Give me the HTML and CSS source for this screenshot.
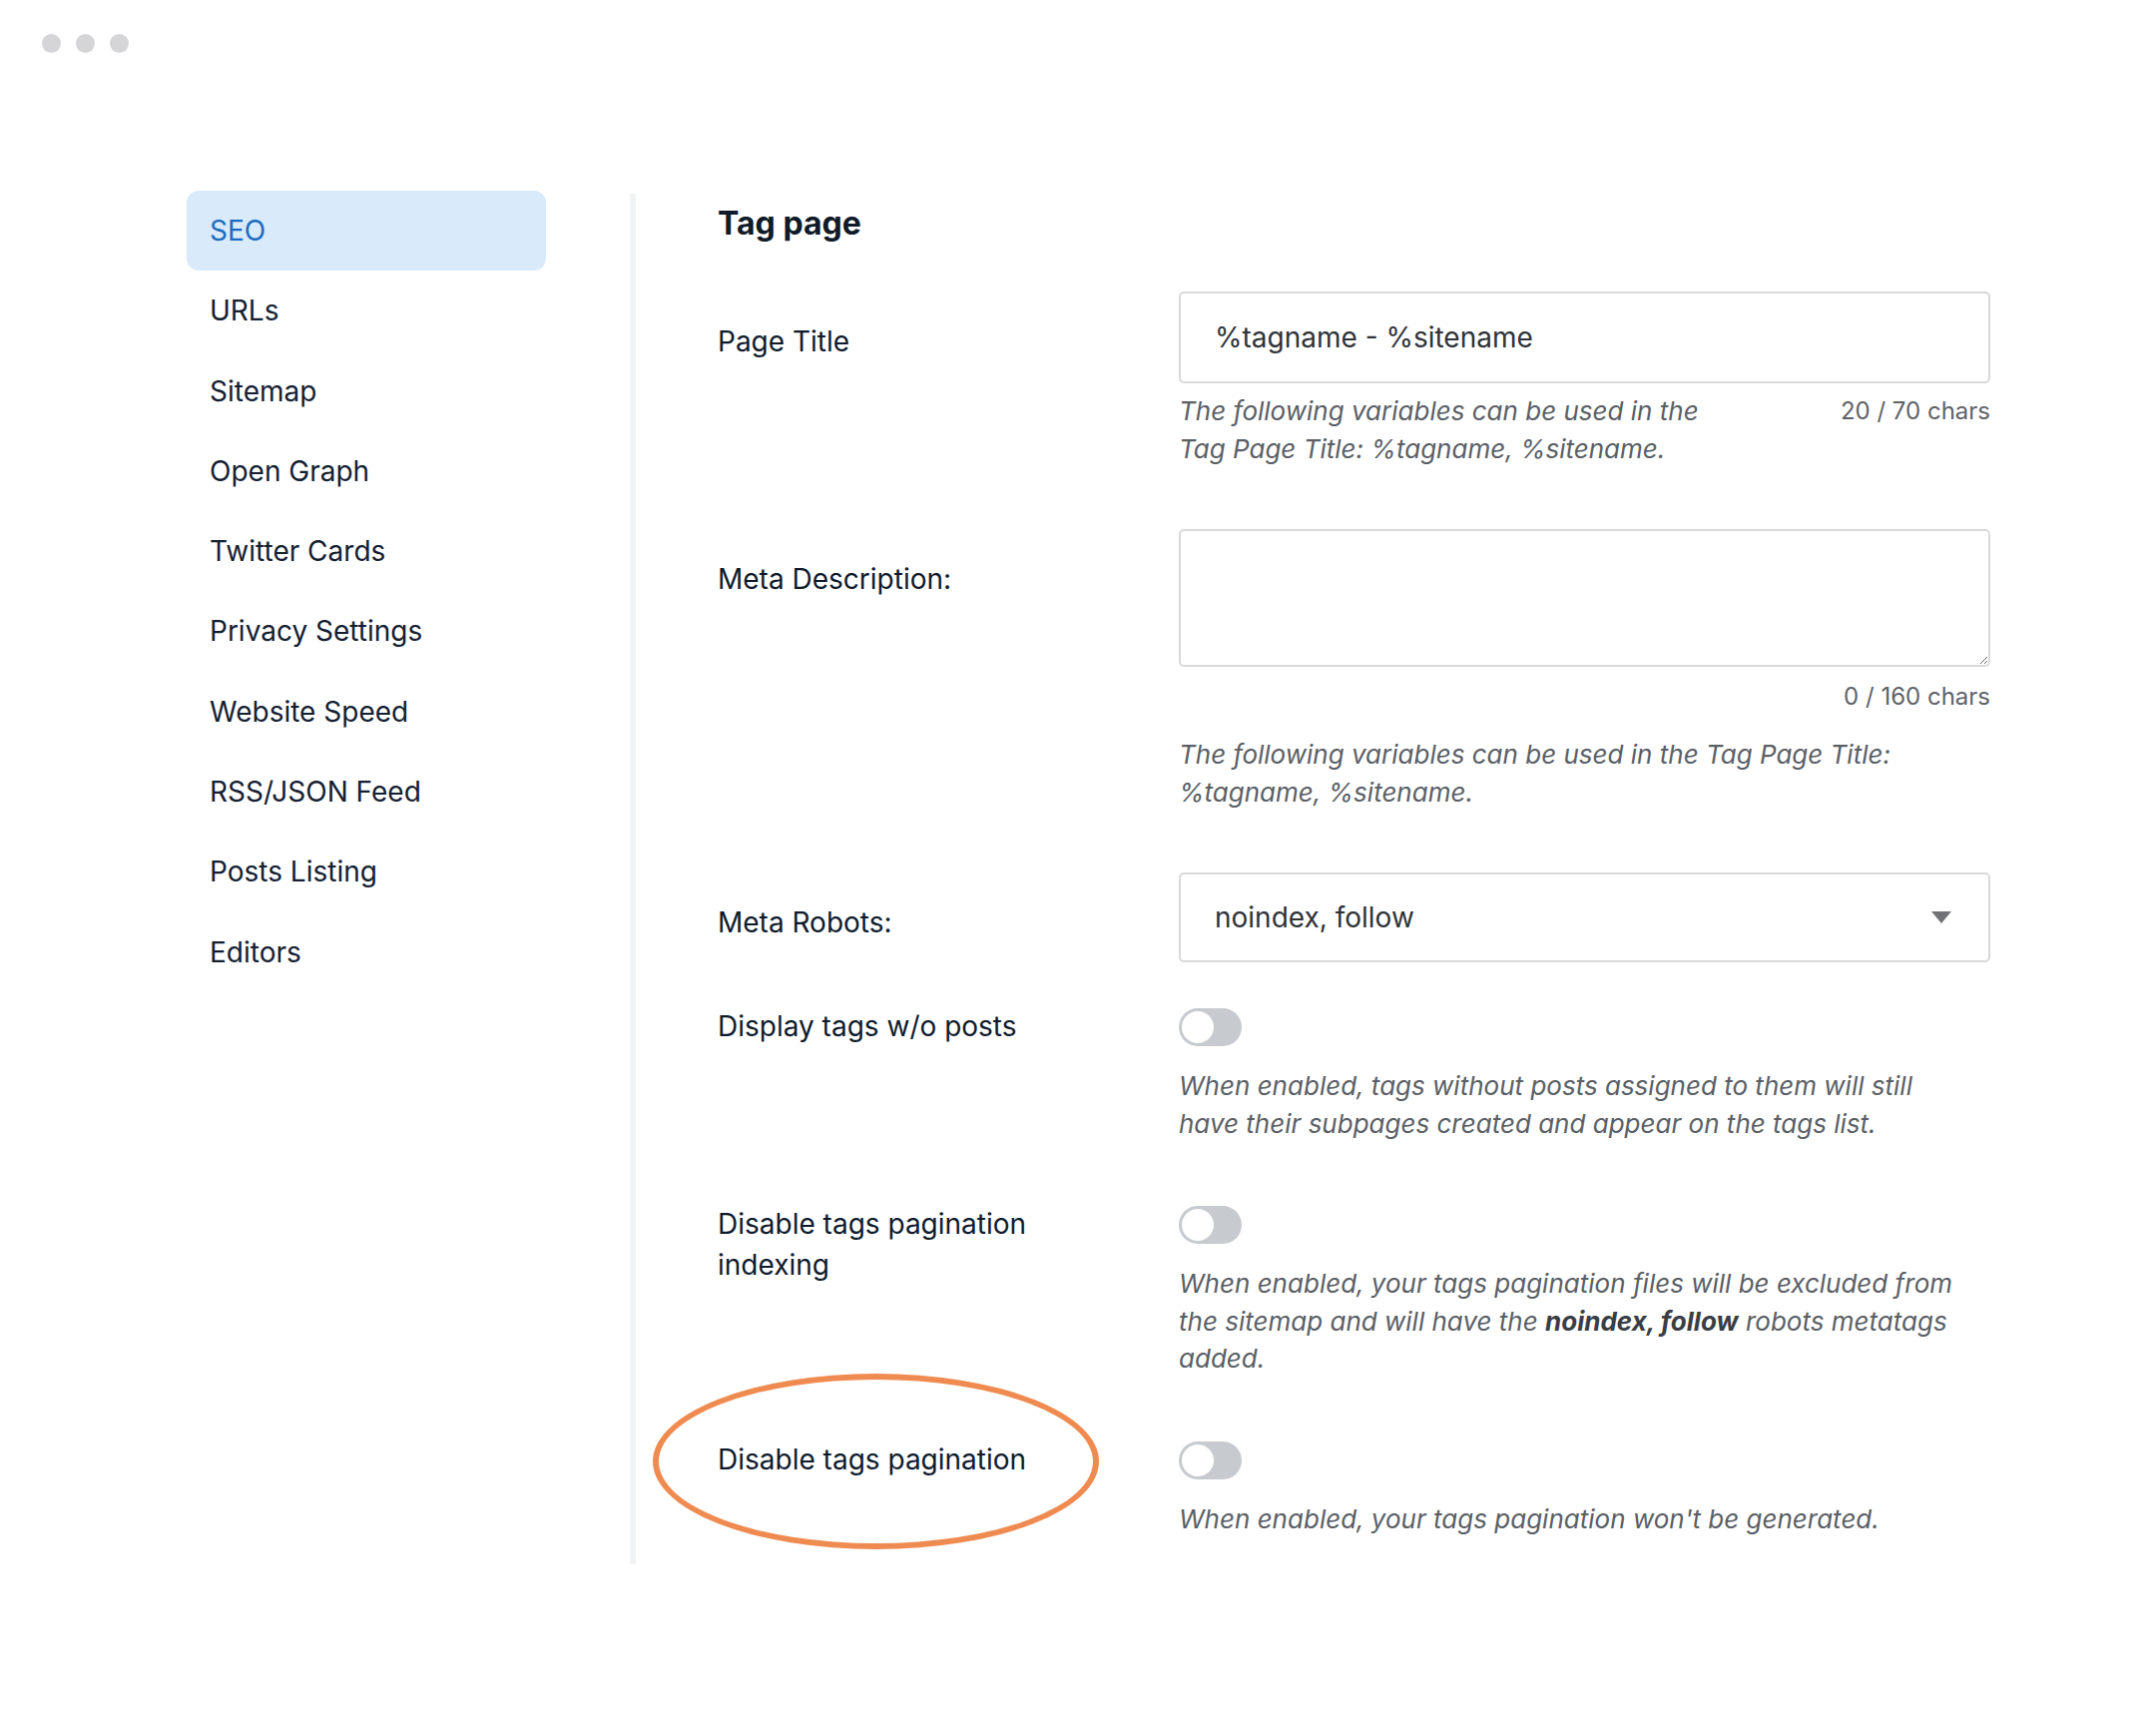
FILE: index.html
```html
<!DOCTYPE html>
<html>
<head>
    <link rel="stylesheet" href="styles.css">
</head>
<body>
    <div class="window-bar">
        <span class="dot"></span>
        <span class="dot"></span>
        <span class="dot"></span>
    </div>

    <div class="layout">
        <ul class="sidebar">
            <li class="active">SEO</li>
            <li>URLs</li>
            <li>Sitemap</li>
            <li>Open Graph</li>
            <li>Twitter Cards</li>
            <li>Privacy Settings</li>
            <li>Website Speed</li>
            <li>RSS/JSON Feed</li>
            <li>Posts Listing</li>
            <li>Editors</li>
        </ul>

        <div class="content">
            <h2>Tag page</h2>

            <div class="row">
                <label class="label label-field">Page Title</label>
                <div class="field">
                    <input type="text" class="text-input" value="%tagname - %sitename">
                    <div class="help-row">
                        <p class="help help-narrow">The following variables can be used in the Tag Page Title: %tagname, %sitename.</p>
                        <span class="counter">20 / 70 chars</span>
                    </div>
                </div>
            </div>

            <div class="row">
                <label class="label label-field">Meta Description:</label>
                <div class="field">
                    <textarea class="text-area"></textarea>
                    <div class="counter counter-block">0 / 160 chars</div>
                    <p class="help help-spaced">The following variables can be used in the Tag Page Title: %tagname, %sitename.</p>
                </div>
            </div>

            <div class="row row-select">
                <label class="label label-field">Meta Robots:</label>
                <div class="field">
                    <div class="select">
                        <span>noindex, follow</span>
                        <svg width="20" height="12" viewBox="0 0 20 12"><path d="M0 0 L20 0 L10 12 Z" fill="#707275"/></svg>
                    </div>
                </div>
            </div>

            <div class="row">
                <label class="label">Display tags w/o posts</label>
                <div class="field">
                    <span class="toggle"><span class="knob"></span></span>
                    <p class="help help-toggle">When enabled, tags without posts assigned to them will still have their subpages created and appear on the tags list.</p>
                </div>
            </div>

            <div class="row">
                <label class="label">Disable tags pagination indexing</label>
                <div class="field">
                    <span class="toggle"><span class="knob"></span></span>
                    <p class="help help-toggle">When enabled, your tags pagination files will be excluded from the sitemap and will have the <strong>noindex, follow</strong> robots metatags added.</p>
                </div>
            </div>

            <div class="row highlighted">
                <label class="label">Disable tags pagination</label>
                <div class="field">
                    <span class="toggle"><span class="knob"></span></span>
                    <p class="help help-toggle">When enabled, your tags pagination won't be generated.</p>
                </div>
                <span class="ring"></span>
            </div>
        </div>
    </div>
</body>
</html>
```

FILE: styles.css
```css
body {
    margin: 0;
    font-family: Inter, "Noto Sans", sans-serif;
    background-color: #fff;
    color: #0f1b2d;
}

.window-bar {
    display: flex;
    gap: 15px;
    padding: 34px 0 0 42px;
    height: 19px;
}
.dot {
    width: 19px;
    height: 19px;
    border-radius: 50%;
    background-color: #d5d5d8;
}

.layout {
    display: flex;
    padding: 138px 0 0 187px;
}

.sidebar {
    list-style: none;
    margin: 0;
    padding: 0;
    width: 360px;
    margin-right: 84px;
}
.sidebar li {
    height: 80.3px;
    line-height: 80px;
    padding-left: 23px;
    font-size: 28px;
    color: #142032;
    border-radius: 12px;
}
.sidebar li.active {
    background-color: #d9eafa;
    color: #1a6cc0;
}

.content {
    margin-top: 3px;
    border-left: 6px solid #f2f3f5;
    padding: 10px 0 27px 82px;
}

h2 {
    margin: 0 0 48px;
    font-size: 32px;
    line-height: 40px;
    font-weight: 700;
    color: #101a28;
}

.row {
    position: relative;
    display: grid;
    grid-template-columns: 380px 813px;
    column-gap: 82px;
    margin-bottom: 62px;
}
.row:last-child {
    margin-bottom: 0;
}
.row-select {
    margin-bottom: 44px;
}

.label {
    font-size: 28px;
    line-height: 41px;
    color: #0f1b2d;
}
.label-field {
    padding-top: 30px;
}

.text-input,
.text-area,
.select {
    box-sizing: border-box;
    width: 100%;
    border: 2px solid #d9d9db;
    border-radius: 5px;
    font-family: Inter, "Noto Sans", sans-serif;
    font-size: 28px;
    color: #2f3338;
    background: #fff;
}
.text-input {
    display: block;
    height: 92px;
    padding: 0 34px;
}
.text-area {
    display: block;
    height: 138px;
    margin: 0;
}
.select {
    height: 90px;
    display: flex;
    align-items: center;
    justify-content: space-between;
    padding: 0 37px 0 34px;
}

.help-row {
    display: flex;
    justify-content: space-between;
    margin-top: 9px;
}
.help {
    margin: 0;
    font-size: 26px;
    line-height: 37.5px;
    font-style: italic;
    color: #5b5f66;
}
.help strong {
    color: #3a3e44;
}
.help-narrow {
    max-width: 560px;
}
.help-spaced {
    margin-top: 21px;
}
.help-toggle {
    max-width: 790px;
    margin-top: 21px;
}
.counter {
    font-size: 24px;
    line-height: 37px;
    color: #5f6368;
}
.counter-block {
    margin-top: 11px;
    text-align: right;
}

.toggle {
    display: block;
    position: relative;
    width: 63px;
    height: 38px;
    margin-top: 2px;
    border-radius: 19px;
    background-color: #c7cacf;
}
.knob {
    position: absolute;
    left: 3px;
    top: 3px;
    width: 32px;
    height: 32px;
    border-radius: 50%;
    background-color: #fff;
}

.ring {
    position: absolute;
    left: -65px;
    top: -66px;
    width: 447px;
    height: 176px;
    box-sizing: border-box;
    border: 6px solid #ef8b50;
    border-radius: 50%;
    pointer-events: none;
}
```
